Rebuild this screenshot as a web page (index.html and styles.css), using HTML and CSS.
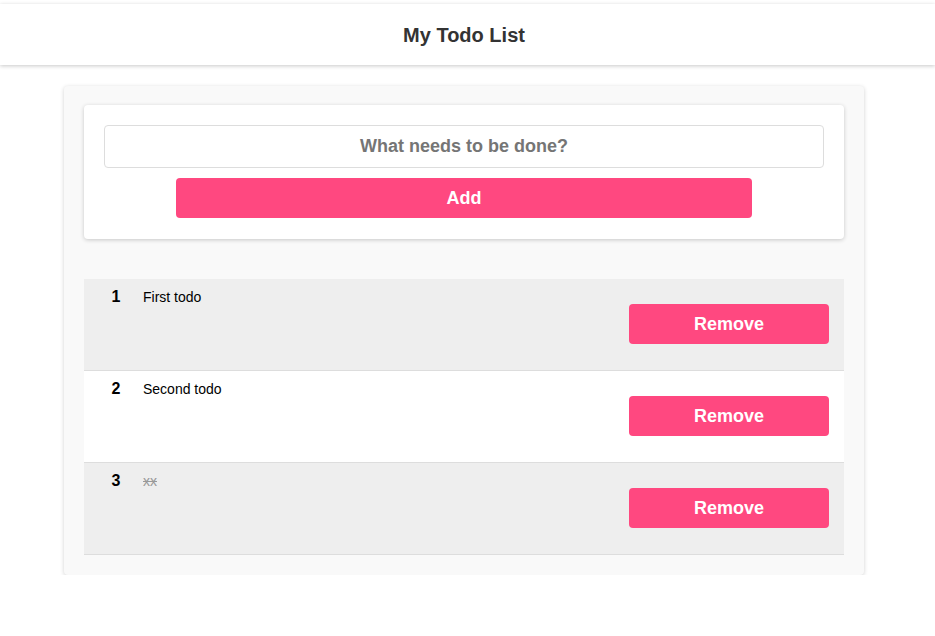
FILE: index.html
```html
<!DOCTYPE html>
<html>
<head>
<meta charset="utf-8">
<link rel="stylesheet" href="styles.css">
</head>
<body>
<header class="header"><h1 class="title">My Todo List</h1></header>
<main class="card">
  <form class="form">
    <input class="input" type="text" placeholder="What needs to be done?">
    <button class="btn add" type="button">Add</button>
  </form>
  <ul class="list">
    <li class="row odd"><span class="num">1</span><span class="text">First todo</span><button class="btn remove" type="button">Remove</button></li>
    <li class="row"><span class="num">2</span><span class="text">Second todo</span><button class="btn remove" type="button">Remove</button></li>
    <li class="row odd"><span class="num">3</span><span class="text done">xx</span><button class="btn remove" type="button">Remove</button></li>
  </ul>
</main>
</body>
</html>
```
FILE: styles.css
```css
html, body { margin: 0; padding: 0; background: #fff; }
body { font-family: "Liberation Sans", Arial, sans-serif; color: #000; }
.header {
  margin-top: 4px;
  height: 61px;
  box-sizing: border-box;
  padding: 2px 7px 0 0;
  background: #fff;
  box-shadow: 0 1px 4px rgba(0,0,0,0.22);
  display: flex;
  align-items: center;
  justify-content: center;
}
.title { margin: 0; font-size: 20px; font-weight: bold; color: #333; }
.card {
  width: 800px;
  box-sizing: border-box;
  margin: 21px 0 0 64px;
  padding: 19px 20px 20px;
  background: #f9f9f9;
  border-radius: 4px;
  box-shadow: 0 1px 4px rgba(0,0,0,0.18);
}
.form {
  background: #fff;
  border-radius: 4px;
  box-shadow: 0 1px 4px rgba(0,0,0,0.2);
  padding: 20px 20px 21px;
  display: flex;
  flex-direction: column;
  align-items: center;
  gap: 10px;
  margin: 0 0 40px;
}
.input {
  width: 100%;
  box-sizing: border-box;
  height: 43px;
  border: 1px solid #ddd;
  border-radius: 4px;
  font-family: inherit;
  font-size: 18px;
  font-weight: bold;
  text-align: center;
  outline: none;
}
.input::placeholder { color: #757575; }
.btn {
  border: none;
  background: #ff4880;
  color: #fff;
  font-family: inherit;
  font-size: 18px;
  font-weight: bold;
  border-radius: 4px;
  height: 40px;
  padding: 0;
}
.add { width: 80%; }
.list { list-style: none; margin: 0; padding: 0; }
.row {
  display: flex;
  align-items: flex-start;
  padding: 10px 15px 25px 20px;
  border-bottom: 1px solid #ddd;
  background: #fff;
  height: 56px;
}
.row.odd { background: #eee; }
.num { width: 24px; text-align: center; font-weight: bold; font-size: 16px; line-height: 16px; }
.text { flex: 1; margin-left: 15px; font-size: 14px; line-height: 16px; }
.done { text-decoration: line-through; color: #999; }
.remove { width: 200px; margin-top: 15px; }
```
